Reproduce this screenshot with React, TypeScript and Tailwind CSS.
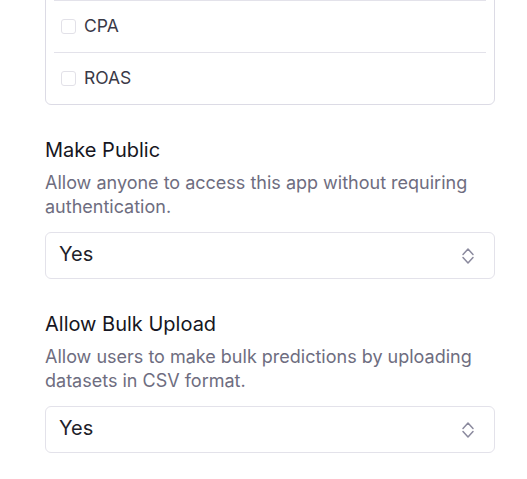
const metrics = ['CTR', 'CPC', 'CPA', 'ROAS'];

function UpDownIcon() {
  return (
    <svg width="14" height="20" viewBox="0 0 14 20" fill="none" className="text-[#8b8a9e]">
      <path d="M2 8.5 7 3 12 8.5" stroke="currentColor" strokeWidth="1.5" strokeLinecap="round" strokeLinejoin="round" />
      <path d="M2 11.5 7 17 12 11.5" stroke="currentColor" strokeWidth="1.5" strokeLinecap="round" strokeLinejoin="round" />
    </svg>
  );
}

function SelectField({ value }: { value: string }) {
  return (
    <div className="mt-[13px] flex h-[47px] items-center justify-between rounded-md border border-[#e3e2ea] bg-white pl-[13px] pr-[19px] text-[20px] text-[#1f1f2b]">
      <span className="-mt-[3px]">{value}</span>
      <UpDownIcon />
    </div>
  );
}

function Setting({ title, description }: { title: string; description: string }) {
  return (
    <div className="mt-[31px]">
      <h3 className="text-[20px] leading-7 font-normal text-[#161622]">{title}</h3>
      <p className="mt-[7px] text-[18px] leading-6 text-[#6e6d80]">{description}</p>
      <SelectField value="Yes" />
    </div>
  );
}

export default function App() {
  return (
    <div className="min-h-screen overflow-hidden bg-white font-['Inter',sans-serif]">
      <div className="w-[450px] ml-[45px] -mt-[104px]">
        <div className="rounded-md border border-[#dcdbe5] px-2">
          {metrics.map((m, i) => (
            <div
              key={m}
              className={`flex items-center gap-2 px-[7px] text-[17.5px] text-[#3a3947] ${
                i < metrics.length - 1 ? 'h-[52px] border-b border-[#e3e2ea]' : 'h-[51px]'
              }`}
            >
              <span className="h-[15px] w-[15px] rounded-[3px] border border-[#e2e1e8] bg-white" />
              <span>{m}</span>
            </div>
          ))}
        </div>

        <Setting
          title="Make Public"
          description="Allow anyone to access this app without requiring authentication."
        />
        <Setting
          title="Allow Bulk Upload"
          description="Allow users to make bulk predictions by uploading datasets in CSV format."
        />
      </div>
    </div>
  );
}
